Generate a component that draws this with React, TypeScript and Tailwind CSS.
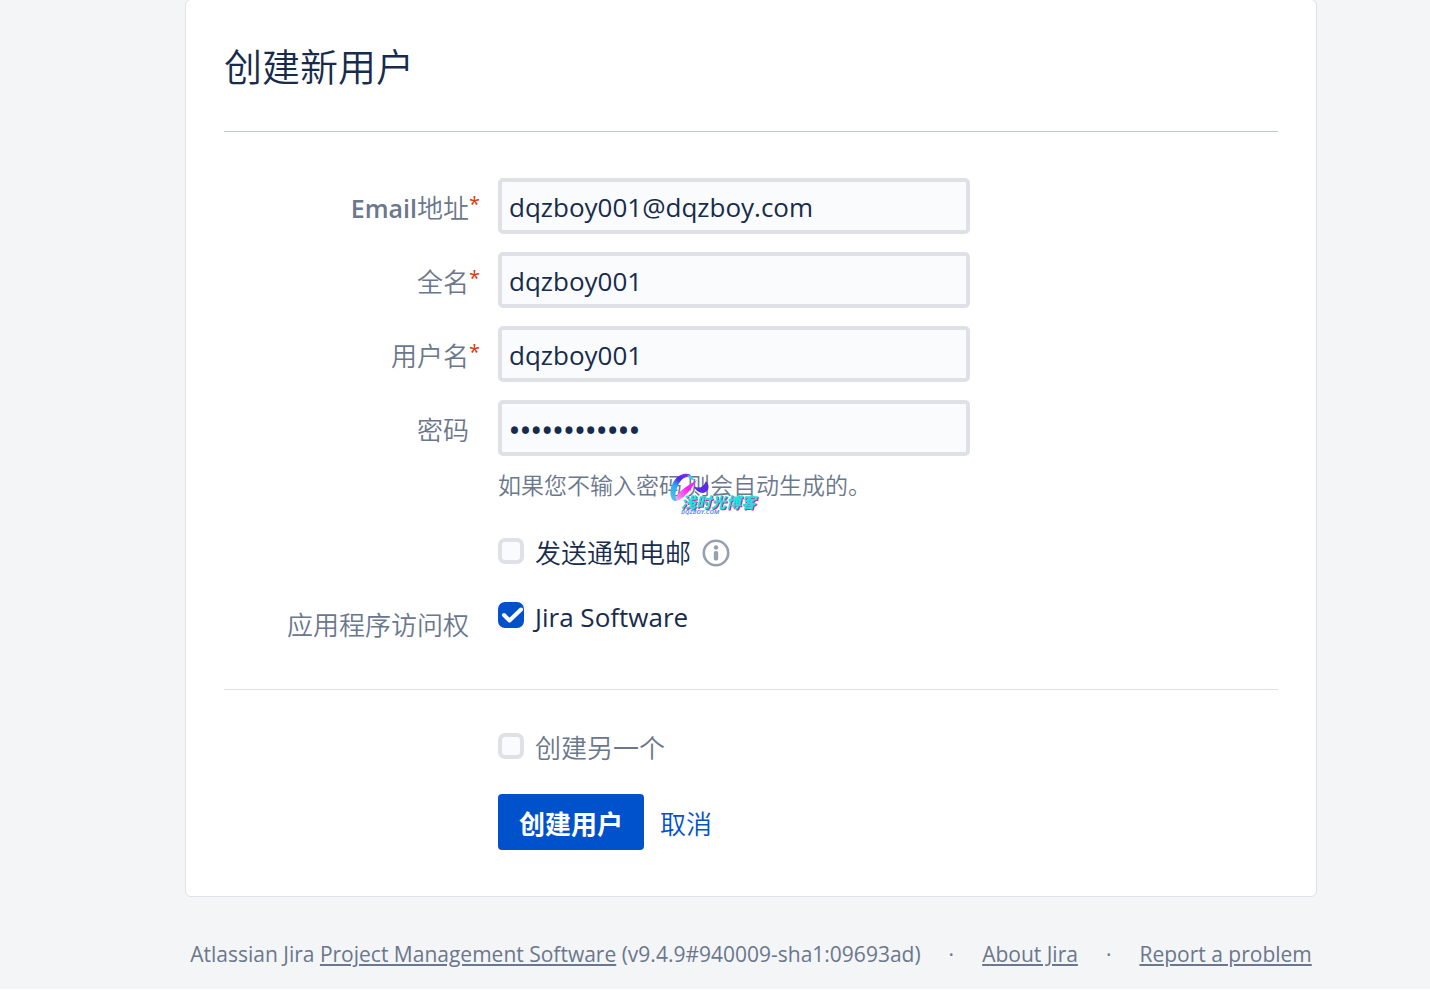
import type { InputHTMLAttributes, ReactNode } from "react";

const labelText = "text-[26px] leading-10 text-[#6b778c]";

function Field({
  id,
  label,
  required,
  ...input
}: { id: string; label: ReactNode; required?: boolean } & InputHTMLAttributes<HTMLInputElement>) {
  return (
    <div className="flex items-center">
      <label
        htmlFor={id}
        className={`w-[274px] shrink-0 pt-1 text-right ${labelText} ${required ? "pr-[19px]" : "pr-[29px]"}`}
      >
        {label}
        {required && <span className="inline-block w-[10px] align-top text-[20px] leading-8 font-normal text-[#de350b]">*</span>}
      </label>
      <input
        id={id}
        className={`h-14 w-[472px] rounded-[5px] border-4 border-[#dfe1e6] bg-[#fafbfc] px-[7px] pt-[2px] text-[#172b4d] outline-none ${
          input.type === "password" ? "font-['Noto_Sans',sans-serif] text-[29px] font-medium" : "text-[26px] font-normal"
        }`}
        {...input}
      />
    </div>
  );
}

function Tick({ id, checked }: { id: string; checked?: boolean }) {
  return (
    <span className="relative mr-[11px] mb-1 flex size-[26px] shrink-0">
      <input
        id={id}
        type="checkbox"
        defaultChecked={checked}
        className="peer size-[26px] appearance-none rounded-[7px] border-4 border-[#dfe1e6] bg-[#fafbfc] checked:border-[#0052cc] checked:bg-[#0052cc]"
      />
      <svg
        viewBox="0 0 26 26"
        className="pointer-events-none absolute inset-0 hidden size-[26px] peer-checked:block"
        fill="none"
        stroke="#fff"
        strokeWidth="4"
        strokeLinecap="round"
        strokeLinejoin="round"
      >
        <path d="M6 13l5.500 5.500L23 7.500" />
      </svg>
    </span>
  );
}

function InfoIcon() {
  return (
    <svg viewBox="0 0 28 28" className="ml-[11px] size-7" aria-label="info">
      <circle cx="14" cy="14" r="12.200" fill="none" stroke="#97a0af" strokeWidth="2.600" />
      <circle cx="14" cy="8.500" r="2.200" fill="#97a0af" />
      <rect x="11.800" y="12" width="4.400" height="9.500" rx="1.800" fill="#97a0af" />
    </svg>
  );
}

function BlogMark() {
  return (
    <span className="pointer-events-none absolute top-[6px] left-[172px] block h-11 w-[92px]">
      <svg viewBox="0 0 92 44" className="absolute inset-0 h-11 w-[92px]" fill="none">
        <defs>
          <linearGradient id="arc" x1="4" y1="28" x2="20" y2="2" gradientUnits="userSpaceOnUse">
            <stop stopColor="#4fc3ea" />
            <stop offset="0.450" stopColor="#2fa8f5" />
            <stop offset="0.700" stopColor="#4b2be0" />
            <stop offset="1" stopColor="#8a2bf0" />
          </linearGradient>
          <linearGradient id="slash" x1="7" y1="28" x2="27" y2="8" gradientUnits="userSpaceOnUse">
            <stop stopColor="#f6a0f2" />
            <stop offset="0.600" stopColor="#fb1df0" />
            <stop offset="1" stopColor="#c04cf5" />
          </linearGradient>
        </defs>
        <path d="M7 28C0 29 -1 19 2 12C5 4 13 -2 21 2L19 4C13 3 9 9 7 15C5 20 5 24 7 28Z" fill="url(#arc)" />
        <path d="M6 28C5 20 17 13 27 7C22 14 15 26 6 28Z" fill="url(#slash)" />
        <path d="M17 3C20 1 23 4 24 7C21 7 19 5 17 3Z" fill="#3fc8f5" />
        <path d="M24 13C29 16 33 15 36 8C41 14 38 19 33 20C29 20 25 17 24 13Z" fill="#5a2be8" />
      </svg>
      <span className="absolute top-[21px] left-[11px] text-[15px] leading-4 font-black whitespace-nowrap text-[#19e3dc] italic [text-shadow:1px_1px_0_#e6189a]">
        浅时光博客
      </span>
      <span className="absolute top-[35px] left-[11px] text-[6px] leading-2 font-bold text-[#6a8cf5] italic">DQZBOY.COM</span>
    </span>
  );
}

export default function App() {
  return (
    <div className="min-h-screen bg-[#f4f5f7] pr-[113px] pl-[185px] font-['Open_Sans','Noto_Sans_CJK_SC',sans-serif] font-[350] text-[#172b4d]">
      <main className="-mt-px rounded-md border border-[#dfe1e6] bg-white px-[38px] pb-[46px]">
        <h1 className="border-b border-[#c1c7d0] pt-[38px] pb-[37px] text-[38px] leading-14 font-[350]">创建新用户</h1>
        <form className="pt-[46px]" onSubmit={(e) => e.preventDefault()}>
          <div className="flex flex-col gap-[18px]">
            <Field
              id="email"
              required
              type="email"
              defaultValue="dqzboy001@dqzboy.com"
              label={<><span className="text-[25px] font-semibold">Email</span>地址</>}
            />
            <Field id="fullname" required type="text" defaultValue="dqzboy001" label="全名" />
            <Field id="username" required type="text" defaultValue="dqzboy001" label="用户名" />
            <Field id="password" type="password" defaultValue="dqzboy001234" label="密码" />
          </div>
          <p className="relative mt-[11px] ml-[274px] text-[23px] leading-9 text-[#6b778c]">
            如果您不输入密码,则会自动生成的。
            <BlogMark />
          </p>
          <div className="mt-[30px] ml-[274px] flex items-center">
            <Tick id="notify" />
            <label htmlFor="notify" className="text-[26px] leading-10">发送通知电邮</label>
            <InfoIcon />
          </div>
          <div className="mt-6 flex">
            <span className={`mt-2 w-[274px] shrink-0 pr-[29px] text-right ${labelText}`}>应用程序访问权</span>
            <div className="flex h-10 items-center">
              <Tick id="software" checked />
              <label htmlFor="software" className="text-[26px] leading-10 font-normal">Jira Software</label>
            </div>
          </div>
          <div className="mt-[44px] border-t border-[#dfe1e6] pt-[38px] pl-[274px]">
            <div className="flex items-center">
              <Tick id="another" />
              <label htmlFor="another" className={labelText}>创建另一个</label>
            </div>
            <div className="mt-[26px] flex items-center gap-4">
              <button type="submit" className="h-14 w-[146px] rounded-[4px] bg-[#0052cc] pt-1 text-[26px] font-bold text-white">
                创建用户
              </button>
              <a href="#cancel" className="pt-1 text-[26px] leading-10 text-[#0052cc]">取消</a>
            </div>
          </div>
        </form>
      </main>
      <footer className="flex items-center justify-center pt-[39px] text-[21px] leading-9 font-normal whitespace-nowrap text-[#6b778c]">
        <span>
          Atlassian Jira <a href="#software-info" className="underline">Project Management Software</a> (v9.4.9#940009-sha1:09693ad)
        </span>
        <span className="mx-7">·</span>
        <a href="#about" className="underline">About Jira</a>
        <span className="mx-7">·</span>
        <a href="#report" className="underline">Report a problem</a>
      </footer>
    </div>
  );
}
